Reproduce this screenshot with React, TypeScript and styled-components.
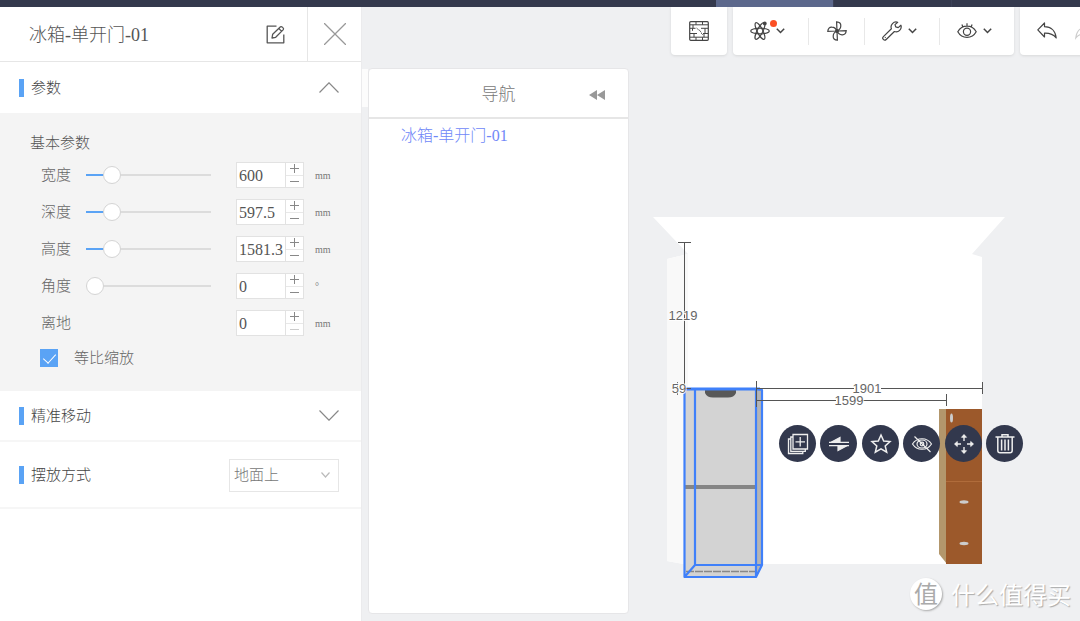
import React, { useState } from "react";
import styled, { createGlobalStyle, css } from "styled-components";

const GlobalStyle = createGlobalStyle`
  * { box-sizing: border-box; }
  body {
    margin: 0;
    background: #eff0f2;
    color: #555;
    font: 300 15px/20px "Liberation Serif", "Noto Sans CJK SC", serif;
  }
  button, input, select { font: inherit; color: inherit; margin: 0; }
  button { padding: 0; border: 0; background: none; cursor: pointer; }
  h1, h2, p { margin: 0; font-weight: inherit; }
`;

const Page = styled.div`
  display: flex;
  flex-direction: column;
  min-height: 100vh;
`;

const TopBar = styled.header`
  display: flex;
  height: 7px;
  background: #34394d;
`;

const TopSpace = styled.span`
  flex: 0 0 716px;
`;

const TopTab = styled.span<{ $active?: boolean }>`
  width: 118px;
  border-right: 1px solid #3c4157;
  background: ${(p) => (p.$active ? "#5c688c" : "transparent")};
`;

const Main = styled.main`
  display: flex;
  flex: 1;
  overflow: hidden;
`;

const Panel = styled.aside`
  flex: 0 0 362px;
  background: #fff;
  border-right: 1px solid #ebebed;
`;

const PanelHead = styled.div`
  display: flex;
  align-items: stretch;
  height: 55px;
  border-bottom: 1px solid #e6e6e6;
`;

const Title = styled.h1`
  flex: 1;
  padding-left: 29px;
  font-size: 18px;
  line-height: 56px;
`;

const HeadButton = styled.button<{ $divided?: boolean }>`
  display: grid;
  place-items: center;
  width: ${(p) => (p.$divided ? 54 : 64)}px;
  ${(p) => p.$divided && css`border-left: 1px solid #e6e6e6;`}
`;

const Section = styled.section<{ $tall?: boolean; $ruled?: boolean }>`
  display: flex;
  align-items: center;
  height: ${(p) => (p.$tall ? 67 : 51)}px;
  padding: 1px 22px 0 19px;
  color: #888;
  ${(p) => p.$ruled && css`border-bottom: 2px solid #f6f6f6;`}
`;

const SectionTitle = styled.h2`
  display: flex;
  align-items: center;
  flex: 1;
  gap: 7px;
  font-size: 15px;
  color: #444;
  &::before {
    content: "";
    width: 5px;
    height: 18px;
    background: #5aa3f5;
  }
`;

const Params = styled.div`
  padding: 17px 22px 16px 41px;
  background: #f4f4f4;
`;

const GroupName = styled.p`
  margin-left: -11px;
  line-height: 26px;
`;

const Row = styled.div`
  display: grid;
  grid-template-columns: 45px 150px 68px 1fr;
  align-items: center;
  height: 37px;
  color: #666;
`;

const Slider = styled.input`
  appearance: none;
  width: 125px;
  height: 18px;
  background: linear-gradient(to right, #5aa3f5 var(--fill), #dcdcdc var(--fill)) center / 100% 2px no-repeat;
  &::-webkit-slider-thumb {
    appearance: none;
    width: 18px;
    height: 18px;
    border: 1px solid #d4d4d4;
    border-radius: 50%;
    background: #fff;
  }
`;

const Stepper = styled.div`
  grid-column: 3;
  display: grid;
  grid-template-columns: 1fr 18px;
  height: 26px;
  border: 1px solid #e2e2e2;
  background: #fff;
`;

const NumberBox = styled.input`
  width: 100%;
  min-width: 0;
  padding: 3px 0 0 2px;
  border: 0;
  background: none;
  outline: 0;
  font-size: 16px;
  font-weight: 400;
  color: #555;
`;

const StepButtons = styled.div`
  display: grid;
  grid-template-rows: 1fr 1fr;
  border-left: 1px solid #e2e2e2;
`;

const StepButton = styled.button`
  display: grid;
  place-items: center;
  color: #888;
  & + & { border-top: 1px solid #e8e8e8; }
  &:disabled { color: #ccc; }
`;

const Unit = styled.span`
  padding: 2px 0 0 11px;
  font-size: 10px;
  line-height: 20px;
  color: #777;
`;

const CheckRow = styled.label`
  display: flex;
  align-items: center;
  gap: 16px;
  height: 34px;
  color: #666;
`;

const Check = styled.input`
  appearance: none;
  width: 18px;
  height: 18px;
  margin-left: -1px;
  background: #fff;
  border: 1px solid #5aa3f5;
  position: relative;
  &:checked { background: #5aa3f5; }
  &:checked::after {
    content: "";
    position: absolute;
    left: 5px;
    top: 1px;
    width: 6px;
    height: 11px;
    border: solid #fff;
    border-width: 0 1px 1px 0;
    transform: rotate(42deg);
  }
`;

const SelectWrap = styled.div`
  display: grid;
  align-items: center;
  width: 110px;
  > * { grid-area: 1 / 1; }
  > svg { justify-self: end; margin-right: 9px; pointer-events: none; }
`;

const Select = styled.select`
  appearance: none;
  height: 33px;
  padding: 0 4px;
  border: 1px solid #e6e6e6;
  border-radius: 0;
  background: #fff;
  color: #777;
`;

const NavColumn = styled.div`
  display: flex;
  flex: 0 0 267px;
  padding: 61px 0 7px;
`;

const NavTab = styled.div`
  width: 6px;
  height: 38px;
  margin-top: 1px;
  background: #fcfcfc;
`;

const NavCard = styled.nav`
  flex: 1;
  border: 1px solid #e6e6e8;
  border-radius: 4px;
  background: #fff;
`;

const NavHead = styled.div`
  display: grid;
  grid-template-columns: 1fr auto 1fr;
  align-items: center;
  height: 50px;
  padding-top: 3px;
  border-bottom: 2px solid #e6e6e6;
  font-size: 17px;
  color: #777;
`;

const CollapseButton = styled.button`
  display: grid;
  justify-self: end;
  margin-right: 23px;
`;

const NavItem = styled.a`
  display: block;
  padding: 7px 32px;
  font-size: 16px;
  color: #7088f8;
  text-decoration: none;
`;

const Stage = styled.section`
  position: relative;
  display: flex;
  flex-direction: column;
  flex: 1;
  min-width: 0;
  overflow: hidden;
`;

const Toolbar = styled.div`
  display: flex;
  gap: 6px;
  padding-left: 42px;
`;

const ToolCard = styled.div`
  display: flex;
  align-items: center;
  flex: none;
  height: 48px;
  border-radius: 0 0 4px 4px;
  background: #fff;
  box-shadow: 0 1px 3px #0000001a;
`;

const ToolGroup = styled(ToolCard)`
  > button + button { border-left: 1px solid #e8e8e8; }
`;

const Tool = styled.button<{ $wide?: boolean }>`
  position: relative;
  display: flex;
  align-items: center;
  justify-content: ${(p) => (p.$wide ? "flex-start" : "center")};
  gap: 6px;
  width: ${(p) => (p.$wide ? 75 : 56)}px;
  height: 27px;
  padding-left: ${(p) => (p.$wide ? 17 : 0)}px;
  color: #444;
`;

const HistoryTools = styled(ToolCard)`
  gap: 18px;
  padding: 0 17px;
  color: #444;
`;

const HistoryButton = styled.button`
  display: grid;
  &:disabled { color: #ccc; }
`;

const Dot = styled.span`
  position: absolute;
  top: 2px;
  left: 37px;
  width: 7px;
  height: 7px;
  border-radius: 50%;
  background: #fb5024;
`;

const Canvas = styled.div`
  position: relative;
  flex: 1;
`;

const Scene = styled.svg`
  display: block;
  font: 400 13px "Liberation Sans", sans-serif;
`;

const Actions = styled.div`
  position: absolute;
  top: 370px;
  left: 150px;
  display: flex;
  gap: 4px;
`;

const Action = styled.button`
  display: grid;
  place-items: center;
  width: 37px;
  height: 37px;
  border-radius: 50%;
  background: #32384d;
  color: #eee;
  &:nth-child(even) { margin-right: 1px; }
`;

const Watermark = styled.div`
  position: absolute;
  right: 9px;
  bottom: 10px;
  display: flex;
  align-items: center;
  gap: 9px;
  font: 400 24px/34px "Noto Sans CJK SC", sans-serif;
  color: #fff;
  text-shadow: 1px 1px 1px #aaa;
`;

const Seal = styled.span`
  width: 32px;
  height: 32px;
  border-radius: 50%;
  background: #fff;
  box-shadow: 1px 1px 2px #aaa;
  color: #aaa;
  font-size: 24px;
  line-height: 30px;
  text-align: center;
  text-shadow: none;
`;

type IconProps = { w?: number; h?: number; sw?: number; children: React.ReactNode };
const Icon = ({ w = 20, h = w, sw = 1.2, children }: IconProps) => (
  <svg width={w} height={h} viewBox={`0 0 ${w} ${h}`} fill="none" stroke="currentColor" strokeWidth={sw} aria-hidden="true">
    {children}
  </svg>
);

const SmallChevron = () => (
  <Icon w={9} h={6} sw={1.5}><path d="M.8 .8 4.5 4.5 8.2 .8" /></Icon>
);

const BrickIcon = () => (
  <Icon>
    <rect x=".7" y=".7" width="18.600" height="18.600" rx="1" />
    <path d="M1 3.800h18M1 16.200h18M7 1v2.800M13.500 1v2.800M7 16.200V19M13.500 16.200V19M1 7.300h5.500M1 12.500h7M12 7.300h7M14 12.500h5M4 3.800v3.500M16 7.300v5.200M3.500 7.300v2.500M5 12.500v3.700M15 12.500v3.700" strokeWidth="1" />
    <path d="m7.500 7 2 1.800M9.800 8.500l2.500 3M12 12l1.800 1.800" strokeWidth=".8" />
  </Icon>
);

const AtomIcon = () => (
  <Icon w={20}>
    <ellipse cx="10" cy="10" rx="9.300" ry="2.800" />
    <ellipse cx="10" cy="10" rx="9.300" ry="2.800" transform="rotate(63 10 10)" />
    <ellipse cx="10" cy="10" rx="9.300" ry="2.800" transform="rotate(117 10 10)" />
    <circle cx="14.800" cy="2.500" r="1.300" fill="currentColor" />
  </Icon>
);

const FanIcon = () => (
  <Icon>
    {[0, 90, 180, 270].map((a) => (
      <path key={a} transform={`rotate(${a} 10 10)`} d="M10 10 9.600 .8c3 .2 4.400 1.700 4.200 4.200-.1 2.200-1.600 4-3.800 5Z" />
    ))}
    <circle cx="10" cy="10" r="1.400" fill="currentColor" />
  </Icon>
);

const WrenchIcon = () => (
  <Icon>
    <path d="M15.700 1.300a5 5 0 0 0-6.300 6.500L1.400 15.600a1.900 1.900 0 0 0 2.800 2.900l8.200-8a5 5 0 0 0 6.500-6.300l-2.700 2.400-2.500-.7-.7-2.300Z" strokeLinejoin="round" />
    <path d="m3 16.800.6-.6" />
  </Icon>
);

const EyeIcon = () => (
  <Icon>
    <path d="M.8 10.700C5 3.200 15 3.200 19.200 10.700 15 18.200 5 18.200.8 10.700ZM10 4.800V2.300M5.800 5.800 4.900 3.600M14.200 5.800l.9-2.200" />
    <circle cx="10" cy="10.700" r="3.600" />
  </Icon>
);

const UndoIcon = () => (
  <Icon>
    <path d="M.8 8.800 7.500 2v3.700c6.500 0 11 4.300 11.700 11.300-2.700-3.500-6-5-11.700-4.800V16Z" strokeLinejoin="round" />
  </Icon>
);

const EditIcon = () => (
  <Icon w={19} sw={1.3}>
    <path d="M10.500 1.200H1.200v16.600h16.600V9.500M6 13l.7-3.800 7.800-7.400c1-.9 3.800 1.500 2.800 2.800L9.700 12.300 6 13ZM12.800 3.500l2.700 2.600" strokeLinejoin="round" />
  </Icon>
);

const actionIcons = {
  copy: (
    <Icon w={22} sw={1.3}>
      <path d="M6 1.500h14.500V16H6zM6 4H3.800v14.300h14.500V16M3.800 6H1.500v14.500h14.300v-2.200M13.200 4v9.500M8.500 8.800H18" />
    </Icon>
  ),
  flip: (
    <Icon w={22}>
      <path d="M1 9.300h20M1 12.700h20" />
      <path d="M3 9.300 12 4.500v4.800ZM19 12.700 10 17.500v-4.800Z" fill="currentColor" />
    </Icon>
  ),
  star: (
    <Icon w={22} sw={1.5}>
      <path d="m11 2 2.700 6 6.300.6-4.800 4.300 1.500 6.300L11 15.900l-5.700 3.300 1.500-6.300L2 8.600 8.300 8Z" />
    </Icon>
  ),
  hide: (
    <Icon w={22}>
      <path d="M1.500 11C6 4 16 4 20.500 11 16 18 6 18 1.500 11ZM3.500 3.500l16 15.500" />
      <ellipse cx="11" cy="11" rx="5" ry="4" />
      <circle cx="11" cy="11" r="1.800" />
    </Icon>
  ),
  move: (
    <Icon w={22} sw={1.4}>
      <path d="M11 8V2M11 14v6M8 11H2M14 11h6" />
      <path d="m8.500 4.300L11 1.500l2.500 2.800ZM8.500 17.700l2.500 2.800 2.500-2.800ZM4.300 8.500 1.500 11l2.800 2.500ZM17.700 8.500l2.800 2.500-2.800 2.500Z" fill="currentColor" strokeWidth=".8" />
    </Icon>
  ),
  remove: (
    <Icon w={22} sw={1.5}>
      <path d="M1.500 4h19M8 4V1.700h6V4M3.800 4v13.500q0 2.300 2.300 2.300h9.800q2.300 0 2.300-2.300V4M7.600 6.500v11M11 6.500v11M14.400 6.500v11" />
    </Icon>
  ),
};

type Param = { id: string; label: string; value: string; unit: string; slider?: number; atMin?: boolean };
const params: Param[] = [
  { id: "width", label: "宽度", value: "600", unit: "mm", slider: 16 },
  { id: "depth", label: "深度", value: "597.5", unit: "mm", slider: 16 },
  { id: "height", label: "高度", value: "1581.3", unit: "mm", slider: 16 },
  { id: "angle", label: "角度", value: "0", unit: "°", slider: 0 },
  { id: "ground", label: "离地", value: "0", unit: "mm", atMin: true },
];

const ParamRow = ({ id, label, value, unit, slider, atMin }: Param) => {
  const [pos, setPos] = useState(slider ?? 0);
  const [text, setText] = useState(value);
  const step = (d: number) => setText(String(Number(text) + d));
  return (
    <Row>
      <label htmlFor={id}>{label}</label>
      {slider !== undefined && (
        <Slider
          type="range"
          aria-label={label}
          value={pos}
          onChange={(e) => setPos(Number(e.target.value))}
          style={{ "--fill": `${pos}%` } as React.CSSProperties}
        />
      )}
      <Stepper>
        <NumberBox id={id} value={text} onChange={(e) => setText(e.target.value)} />
        <StepButtons>
          <StepButton aria-label={`${label} +`} onClick={() => step(1)}>
            <Icon w={9} sw={1}><path d="M0 4.500h9M4.500 0v9" /></Icon>
          </StepButton>
          <StepButton aria-label={`${label} -`} disabled={atMin} onClick={() => step(-1)}>
            <Icon w={9} sw={1}><path d="M0 4.500h9" /></Icon>
          </StepButton>
        </StepButtons>
      </Stepper>
      <Unit>{unit}</Unit>
    </Row>
  );
};

const Room = () => (
  <Scene width="451" height="566" viewBox="629 55 451 566">
    <path d="M653 217h352l-33 37 10 3v307H684l-17-3V259l21-5Z" fill="#fff" />
    <path d="m667 259 21-5v311l-21-4Z" fill="#f9f9f9" />

    <path d="M684 389h78v176l-6 12h-72Z" fill="#d3d3d3" />
    <path d="M756 389h6v176l-6 12Z" fill="#b4b4b4" />
    <path d="M705 390h31v3q-2 4.500-8 4.500h-15q-6 0-8-4.500Z" fill="#585858" />
    <path d="M685 487h71" stroke="#858585" strokeWidth="4" />
    <path d="M686 571.500h70" stroke="#888" strokeWidth="1.500" strokeDasharray="8 1" />
    <g fill="none" stroke="#3f80fa" strokeWidth="2.200" strokeLinejoin="round">
      <path d="M684.500 389v188H756l6-12V390l-4-1M695 390v175l-10.500 12M695 565h67M756 389v188" />
      <path d="M684 389h76" strokeWidth="3" />
    </g>

    <path d="M939 409h8v155l-8-10Z" fill="#b3976c" />
    <path d="M946 409h36v155h-36Z" fill="#9c592b" />
    <path d="M946 481.500h36" stroke="#b06c3b" />
    <g fill="#ccc">
      <ellipse cx="951.500" cy="418" rx="1.500" ry="4.500" />
      <ellipse cx="964" cy="502" rx="4.500" ry="1.700" />
      <ellipse cx="964" cy="543.500" rx="4.500" ry="1.700" />
    </g>

    <path
      d="M678 242.500h13M684.500 242v145M756.500 381v26M756 388.500h98M881 388.500h101M982.500 382v12M756 400.500h80M863 400.500h83M946.500 394v12M685 388.500h6"
      stroke="#555"
      fill="none"
    />
    <path d="M677.500 382v13" stroke="#777" />
    <g fill="#666" textAnchor="middle" stroke="#fff" strokeWidth="1.500" paintOrder="stroke">
      <text x="683" y="320">1219</text>
      <text x="679" y="393">59</text>
      <text x="867" y="393">1901</text>
      <text x="849" y="405">1599</text>
    </g>
  </Scene>
);

export default function App() {
  return (
    <Page>
      <GlobalStyle />
      <TopBar>
        <TopSpace />
        <TopTab $active />
        <TopTab />
      </TopBar>
      <Main>
        <Panel>
          <PanelHead>
            <Title>冰箱-单开门-01</Title>
            <HeadButton aria-label="重命名"><EditIcon /></HeadButton>
            <HeadButton $divided aria-label="关闭">
              <Icon w={22} sw={1.3}><path d="m0 0 22 22M22 0 0 22" stroke="#999" /></Icon>
            </HeadButton>
          </PanelHead>
          <Section>
            <SectionTitle>参数</SectionTitle>
            <button aria-label="收起"><Icon w={20} h={11}><path d="M.5 10.500 10 .8l9.500 9.700" /></Icon></button>
          </Section>
          <Params>
            <GroupName>基本参数</GroupName>
            {params.map((p) => <ParamRow key={p.id} {...p} />)}
            <CheckRow><Check type="checkbox" defaultChecked />等比缩放</CheckRow>
          </Params>
          <Section $ruled>
            <SectionTitle>精准移动</SectionTitle>
            <button aria-label="展开"><Icon w={20} h={11}><path d="M.5 .5 10 10.200 19.500 .5" /></Icon></button>
          </Section>
          <Section $tall $ruled>
            <SectionTitle><label htmlFor="placement">摆放方式</label></SectionTitle>
            <SelectWrap>
              <Select id="placement"><option>地面上</option></Select>
              <Icon w={9} h={6}><path d="M.5 .5 4.500 5 8.500 .5" stroke="#bbb" /></Icon>
            </SelectWrap>
          </Section>
        </Panel>

        <NavColumn>
          <NavTab />
          <NavCard>
            <NavHead>
              <span />
              <span>导航</span>
              <CollapseButton aria-label="收起导航">
                <svg width="16" height="10" fill="#999"><path d="M8 0v10L0 5ZM16 0v10L8 5Z" /></svg>
              </CollapseButton>
            </NavHead>
            <NavItem href="#fridge">冰箱-单开门-01</NavItem>
          </NavCard>
        </NavColumn>

        <Stage>
          <Toolbar>
            <ToolCard><Tool aria-label="墙体"><BrickIcon /></Tool></ToolCard>
            <ToolGroup>
              <Tool $wide aria-label="渲染"><AtomIcon /><SmallChevron /><Dot /></Tool>
              <Tool aria-label="风扇"><FanIcon /></Tool>
              <Tool $wide aria-label="工具"><WrenchIcon /><SmallChevron /></Tool>
              <Tool $wide aria-label="显示"><EyeIcon /><SmallChevron /></Tool>
            </ToolGroup>
            <HistoryTools>
              <HistoryButton aria-label="撤销"><UndoIcon /></HistoryButton>
              <HistoryButton aria-label="重做" disabled>
                <Icon><path d="M19.200 8.800 12.500 2v3.700C6 5.700 1.500 10 .8 17c2.700-3.500 6-5 11.700-4.800V16Z" /></Icon>
              </HistoryButton>
            </HistoryTools>
          </Toolbar>
          <Canvas>
            <Room />
            <Actions>
              <Action aria-label="复制">{actionIcons.copy}</Action>
              <Action aria-label="翻转">{actionIcons.flip}</Action>
              <Action aria-label="收藏">{actionIcons.star}</Action>
              <Action aria-label="隐藏">{actionIcons.hide}</Action>
              <Action aria-label="移动">{actionIcons.move}</Action>
              <Action aria-label="删除">{actionIcons.remove}</Action>
            </Actions>
          </Canvas>
          <Watermark><Seal>值</Seal>什么值得买</Watermark>
        </Stage>
      </Main>
    </Page>
  );
}
